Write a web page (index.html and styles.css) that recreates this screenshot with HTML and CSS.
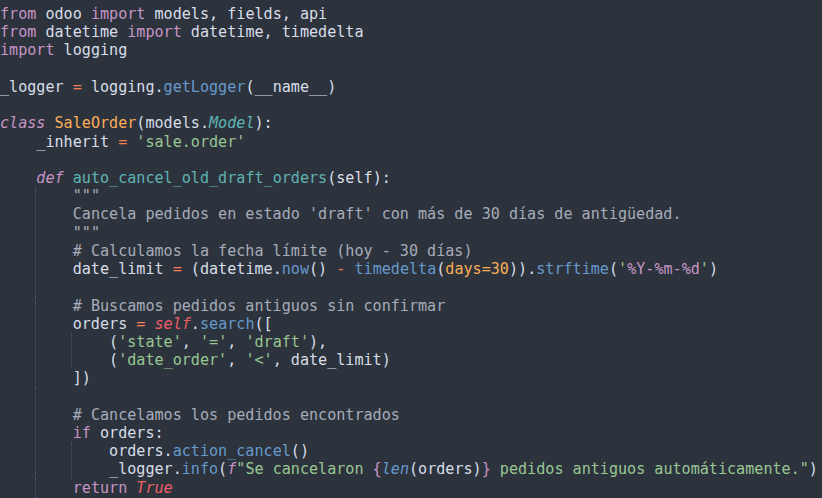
FILE: index.html
```html
<!DOCTYPE html>
<html>
<head>
<meta charset="utf-8">
<link rel="stylesheet" href="styles.css">
</head>
<body>
<div class="editor">
<div class="ln"><span class="k">from</span> odoo <span class="k">import</span> models, fields, api</div>
<div class="ln"><span class="k">from</span> datetime <span class="k">import</span> datetime, timedelta</div>
<div class="ln"><span class="k">import</span> logging</div>
<div class="ln"> </div>
<div class="ln">_logger <span class="op">=</span> logging.<span class="fn">getLogger</span>(__name__)</div>
<div class="ln"> </div>
<div class="ln"><span class="k i">class</span> <span class="cls">SaleOrder</span>(models.<span class="inh i">Model</span>):</div>
<div class="ln">    _inherit <span class="op">=</span> <span class="s">'sale.order'</span></div>
<div class="ln"> </div>
<div class="ln">    <span class="k i">def</span> <span class="dn">auto_cancel_old_draft_orders</span>(<span class="par">self</span>):</div>
<div class="ln g1">        <span class="c">"""</span></div>
<div class="ln g1">        <span class="c">Cancela pedidos en estado 'draft' con más de 30 días de antigüedad.</span></div>
<div class="ln g1">        <span class="c">"""</span></div>
<div class="ln g1">        <span class="c"># Calculamos la fecha límite (hoy - 30 días)</span></div>
<div class="ln g1">        date_limit <span class="op">=</span> (datetime.<span class="fn">now</span>() <span class="op">-</span> <span class="fn">timedelta</span>(<span class="num">days=30</span>)).<span class="fn">strftime</span>(<span class="s">'</span><span class="ph">%Y-%m-%d</span><span class="s">'</span>)</div>
<div class="ln g1"> </div>
<div class="ln g1">        <span class="c"># Buscamos pedidos antiguos sin confirmar</span></div>
<div class="ln g1">        orders <span class="op">=</span> <span class="self i">self</span>.<span class="fn">search</span>([</div>
<div class="ln g2">            (<span class="s">'state'</span>, <span class="s">'='</span>, <span class="s">'draft'</span>),</div>
<div class="ln g2">            (<span class="s">'date_order'</span>, <span class="s">'&lt;'</span>, date_limit)</div>
<div class="ln g1">        ])</div>
<div class="ln g1"> </div>
<div class="ln g1">        <span class="c"># Cancelamos los pedidos encontrados</span></div>
<div class="ln g1">        <span class="k">if</span> orders:</div>
<div class="ln g2">            orders.<span class="fn">action_cancel</span>()</div>
<div class="ln g2">            _logger.<span class="fn">info</span>(<span class="k i">f</span><span class="s">"Se cancelaron </span><span class="k">{</span><span class="fn i">len</span>(orders)<span class="k">}</span><span class="s"> pedidos antiguos automáticamente."</span>)</div>
<div class="ln g1">        <span class="k">return</span> <span class="self i">True</span></div>
<div class="ln g1">                                                                                        <span class="c">"</span></div>
</div>
</body>
</html>
```

FILE: styles.css
```css
html, body {
  margin: 0;
  padding: 0;
  background: #2d333d;
}

.editor {
  width: 822px;
  height: 498px;
  overflow: hidden;
  box-sizing: border-box;
  padding-top: 5px;
  background: #2d333d;
  color: #d8dee9;
  font-family: "DejaVu Sans Mono", monospace;
  font-size: 15.1px;
  line-height: 18.23px;
}

.ln {
  white-space: pre;
  height: 18.23px;
}

.g1 {
  background-image: repeating-linear-gradient(to bottom, #525b68 0 1px, transparent 1px 2px);
  background-size: 1px 100%;
  background-position: 35px 0;
  background-repeat: no-repeat;
}

.g2 {
  background-image:
    repeating-linear-gradient(to bottom, #525b68 0 1px, transparent 1px 2px),
    repeating-linear-gradient(to bottom, #525b68 0 1px, transparent 1px 2px);
  background-size: 1px 100%, 1px 100%;
  background-position: 35px 0, 71px 0;
  background-repeat: no-repeat;
}

.i { font-style: italic; }
.k { color: #c695c6; }
.op { color: #f97b57; }
.s { color: #99c794; }
.ph { color: #c695c6; }
.fn { color: #6699cc; }
.dn { color: #5fb4b4; }
.inh { color: #5fb4b4; }
.cls { color: #f9ae58; }
.num { color: #f9ae58; }
.par { color: #d8dee9; }
.self { color: #ec5f66; }
.c { color: #a6acb9; }
```
